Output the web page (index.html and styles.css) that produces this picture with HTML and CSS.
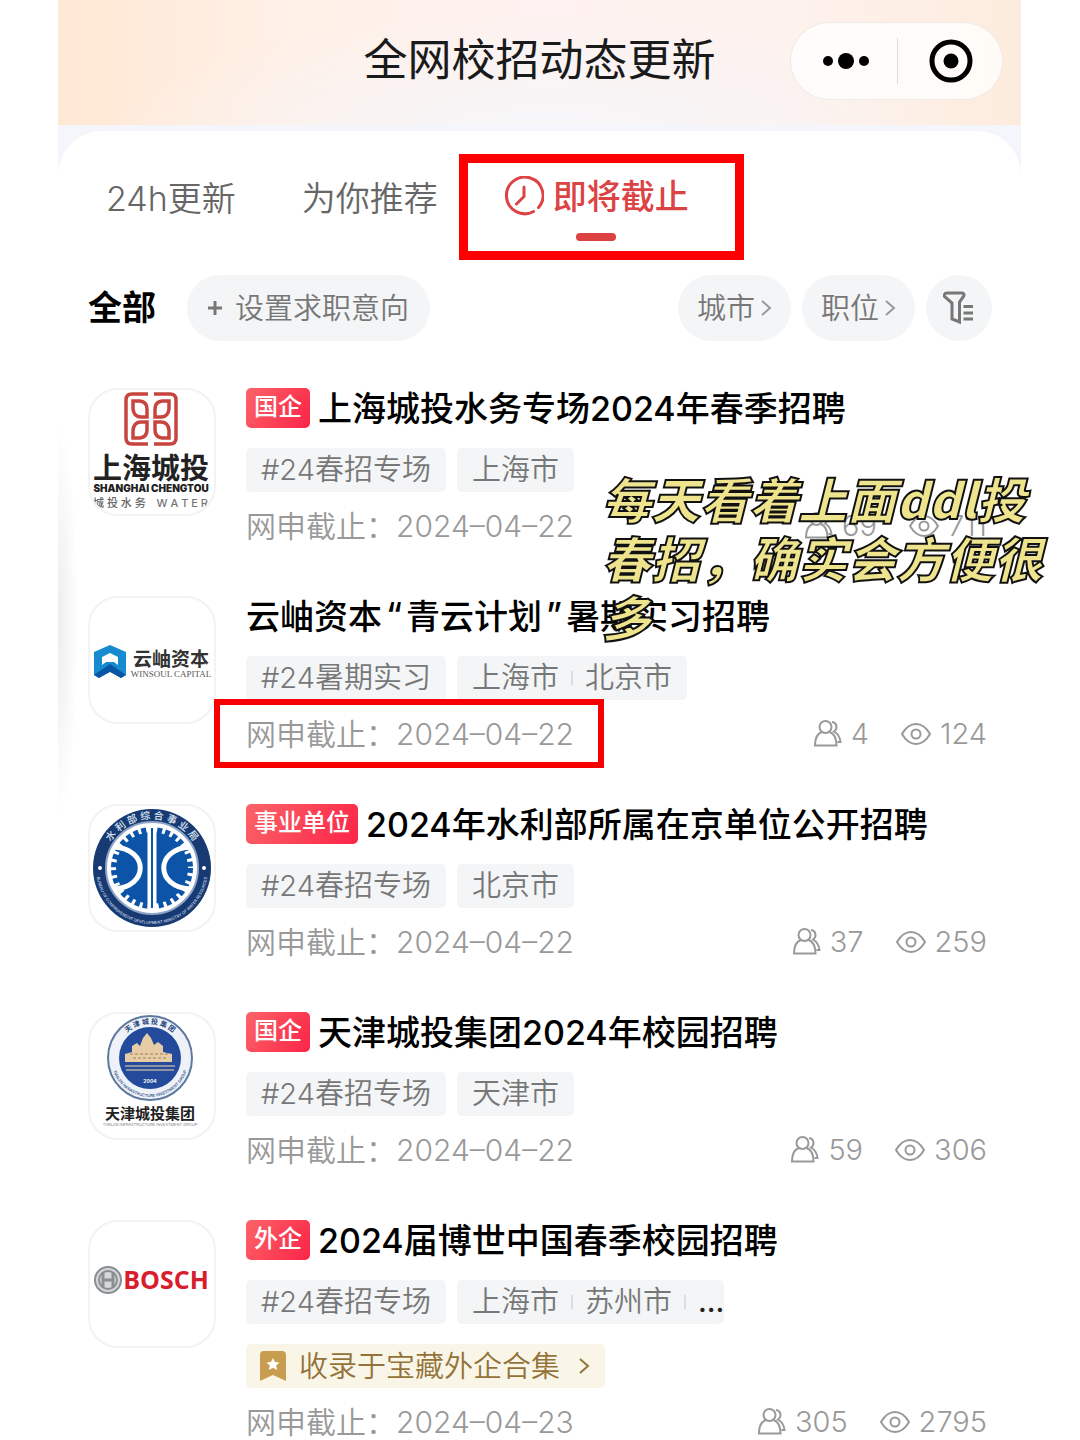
FILE: index.html
```html
<!DOCTYPE html>
<html lang="zh-CN">
<head>
<meta charset="utf-8">
<meta name="viewport" content="width=device-width, initial-scale=1">
<title>全网校招动态更新</title>
<link rel="stylesheet" href="styles.css">
</head>
<body>
<svg class="defs" aria-hidden="true">
  <symbol id="people" viewBox="0 0 28 28">
    <circle cx="11.500" cy="7" r="6"/>
    <path d="M8 12C3.500 13.500 1 18 1 25.500h21.500c0-7.500-2.500-12-7-13.500M18 2c5 .5 6 7 2 9.500 3.500 2 6 5 6.500 10.500h-3"/>
  </symbol>
  <symbol id="eye" viewBox="0 0 30 24">
    <path d="M1 12C5 5 10 2 15 2s10 3 14 10c-4 7-9 10-14 10S5 19 1 12z"/>
    <circle cx="15" cy="12" r="4.500"/>
  </symbol>
  <symbol id="chevron" viewBox="0 0 12 18">
    <path d="M2 2l8 7-8 7"/>
  </symbol>
</svg>

<div class="app">
  <header class="navbar">
    <h1 class="navbar-title">全网校招动态更新</h1>
    <div class="capsule">
      <button class="capsule-button" aria-label="更多">
        <svg width="48" height="18" viewBox="0 0 48 18"><circle cx="6" cy="9" r="5"/><circle cx="24" cy="9" r="8"/><circle cx="42" cy="9" r="5"/></svg>
      </button>
      <button class="capsule-button" aria-label="关闭">
        <svg width="44" height="44" viewBox="0 0 44 44"><circle cx="22" cy="22" r="19" fill="none" stroke="#000" stroke-width="5"/><circle cx="22" cy="22" r="7.500"/></svg>
      </button>
    </div>
  </header>

  <main class="sheet">
    <nav class="tabs">
      <a class="tab" href="#latest">24h更新</a>
      <a class="tab" href="#recommended">为你推荐</a>
      <a class="tab tab-active" href="#closing" aria-current="page">
        <svg class="clock" viewBox="0 0 40 40"><path d="M29.500 35.500A18.300 18.300 0 1 1 34.500 31.500M20 11v9.500l-7.500 7.500"/></svg>
        <span>即将截止</span>
      </a>
    </nav>

    <div class="filters">
      <button class="filter-all">全部</button>
      <button class="pill pill-intent"><svg width="16" height="16" viewBox="0 0 16 16"><path d="M8 1v14M1 8h14"/></svg>设置求职意向</button>
      <button class="pill pill-pick">城市<svg class="pick-arrow"><use href="#chevron"/></svg></button>
      <button class="pill pill-pick">职位<svg class="pick-arrow"><use href="#chevron"/></svg></button>
      <button class="pill pill-icon" aria-label="筛选">
        <svg width="32" height="34" viewBox="0 0 32 34"><path d="M4 2h15c2 0 2.500 2 1.500 3.500L16.500 11v20L9 28V12L2 6C.5 4.500 1.500 2 4 2zM20.500 15.500H30M20.500 22H30M20.500 28H30"/></svg>
      </button>
    </div>

    <ul class="jobs">
      <li class="job">
        <svg class="logo" viewBox="2 2 124 124" role="img" aria-label="上海城投">
          <g fill="none" stroke="#c8443f" stroke-width="3.500">
            <path d="M60 6H44q-6 0-6 6v38q0 6 6 6h16M66 6h16q6 0 6 6v38q0 6-6 6H66"/>
            <path d="M59 29V21q0-7-7-8h-7v8q1 8 8 8zM67 29V21q0-7 7-8h7v8q-1 8-8 8zM59 34v8q0 7-7 8h-7v-8q1-8 8-8zM67 34v8q0 7 7 8h7v-8q-1-8-8-8z"/>
          </g>
          <text x="63" y="91" font-size="29" font-weight="700" text-anchor="middle" fill="#222">上海城投</text>
          <text x="63" y="104" font-size="10" font-weight="900" text-anchor="middle" fill="#222">SHANGHAI CHENGTOU</text>
          <text x="5" y="119" font-size="11" fill="#666" font-weight="500">城 投 水 务</text>
          <text x="120" y="119" font-size="11" text-anchor="end" fill="#777" font-weight="500">W A T E R</text>
        </svg>
        <div class="job-body">
          <h2 class="job-title"><span class="badge">国企</span>上海城投水务专场2024年春季招聘</h2>
          <div class="tags"><span class="tag">#24春招专场</span><span class="tag">上海市</span></div>
          <div class="meta">
            <span class="deadline">网申截止：<time datetime="2024-04-22">2024–04–22</time></span>
            <span class="stat"><svg class="icon-people"><use href="#people"/></svg>69</span>
            <span class="stat"><svg class="icon-eye"><use href="#eye"/></svg>711</span>
          </div>
        </div>
        <p class="note">每天看着上面ddl投<br>春招，确实会方便很<br>多</p>
      </li>

      <li class="job">
        <svg class="logo" viewBox="2 2 124 124" role="img" aria-label="云岫资本">
          <path d="M6 56l16-7 16 7v23l-5 3-11-7-11 7-5-3z" fill="#168bcf"/>
          <path d="M6 79l16-11 16 11-5 3-11-6-11 6z" fill="#0755a5"/>
          <path d="M14 61l8-4 8 4v8l-4-3h-8l-4 3z" fill="#fff"/>
          <text x="83" y="70" font-size="19" font-weight="700" text-anchor="middle" fill="#333">云岫资本</text>
          <text class="serif" x="83" y="81" font-size="9" text-anchor="middle" fill="#555">WINSOUL CAPITAL</text>
        </svg>
        <div class="job-body">
          <h2 class="job-title">云岫资本<span class="quote">“</span>青云计划<span class="quote">”</span>暑期实习招聘</h2>
          <div class="tags"><span class="tag">#24暑期实习</span><span class="tag"><span>上海市</span><span>北京市</span></span></div>
          <div class="meta">
            <span class="deadline deadline-marked">网申截止：<time datetime="2024-04-22">2024–04–22</time></span>
            <span class="stat"><svg class="icon-people"><use href="#people"/></svg>4</span>
            <span class="stat"><svg class="icon-eye"><use href="#eye"/></svg>124</span>
          </div>
        </div>
      </li>

      <li class="job">
        <svg class="logo" viewBox="2 2 124 124" role="img" aria-label="水利部综合事业局">
          <defs><path id="ring-a" d="M15 64a49 49 0 0 1 98 0"/><path id="ring-b" d="M8 64a56 56 0 0 0 112 0"/></defs>
          <circle cx="64" cy="64" r="59" fill="#173a73"/>
          <circle cx="64" cy="64" r="46" fill="#fff" stroke="#8fa5c8" stroke-width="2"/>
          <circle cx="64" cy="64" r="36" fill="#0c54a8"/>
          <circle cx="64" cy="64" r="38" fill="none" stroke="#0c54a8" stroke-width="6" stroke-dasharray="5 3"/>
          <path d="M64 20v88" stroke="#fff" stroke-width="9"/>
          <path d="M64 24v80" stroke="#0c54a8" stroke-width="2"/>
          <path d="M26 43c35 2 35 40 0 42M102 43c-35 2-35 40 0 42" fill="none" stroke="#fff" stroke-width="5"/>
          <circle cx="12" cy="64" r="2" fill="#fff"/><circle cx="116" cy="64" r="2" fill="#fff"/>
          <text font-size="10" font-weight="500" fill="#dfe7f3"><textPath href="#ring-a" startOffset="50%" text-anchor="middle">水 利 部 综 合 事 业 局</textPath></text>
          <text font-size="4" font-weight="500" fill="#c9d5e8"><textPath href="#ring-b" startOffset="50%" text-anchor="middle">BUREAU OF COMPREHENSIVE DEVELOPMENT MINISTRY OF WATER RESOURCES</textPath></text>
        </svg>
        <div class="job-body">
          <h2 class="job-title"><span class="badge">事业单位</span>2024年水利部所属在京单位公开招聘</h2>
          <div class="tags"><span class="tag">#24春招专场</span><span class="tag">北京市</span></div>
          <div class="meta">
            <span class="deadline">网申截止：<time datetime="2024-04-22">2024–04–22</time></span>
            <span class="stat"><svg class="icon-people"><use href="#people"/></svg>37</span>
            <span class="stat"><svg class="icon-eye"><use href="#eye"/></svg>259</span>
          </div>
        </div>
      </li>

      <li class="job">
        <svg class="logo" viewBox="2 2 124 124" role="img" aria-label="天津城投集团">
          <defs><path id="ring-c" d="M28 46a34 34 0 0 1 68 0"/><path id="ring-d" d="M23 46a39 39 0 0 0 78 0"/></defs>
          <circle cx="62" cy="46" r="42" fill="#eef2f8" stroke="#5f789f" stroke-width="2"/>
          <circle cx="62" cy="46" r="31" fill="#244b9b"/>
          <path d="M37 50v-8l7-2v-6l5-3 3 3 3-8 4-5 4 5 3 7 4-3 5 4v6l9 2v8z" fill="#e6cda5"/>
          <path d="M37 54h50M38 58h48" stroke="#8f92a0" stroke-width="2"/>
          <path d="M42 42h40M45 46h34" stroke="#9b8160" stroke-width="1" stroke-dasharray="3 2"/>
          <text x="62" y="71" font-size="5" font-weight="700" fill="#fff" text-anchor="middle">2004</text>
          <text font-size="7" fill="#24457f" font-weight="700"><textPath href="#ring-c" startOffset="50%" text-anchor="middle">天 津 城 投 集 团</textPath></text>
          <text font-size="4" font-weight="500" fill="#24457f"><textPath href="#ring-d" startOffset="50%" text-anchor="middle">TIANJIN INFRASTRUCTURE INVESTMENT GROUP</textPath></text>
          <text x="62" y="107" font-size="15" font-weight="700" text-anchor="middle" fill="#222">天津城投集团</text>
          <text x="62" y="114" font-size="4" text-anchor="middle" fill="#555">TIANJIN INFRASTRUCTURE INVESTMENT GROUP</text>
        </svg>
        <div class="job-body">
          <h2 class="job-title"><span class="badge">国企</span>天津城投集团2024年校园招聘</h2>
          <div class="tags"><span class="tag">#24春招专场</span><span class="tag">天津市</span></div>
          <div class="meta">
            <span class="deadline">网申截止：<time datetime="2024-04-22">2024–04–22</time></span>
            <span class="stat"><svg class="icon-people"><use href="#people"/></svg>59</span>
            <span class="stat"><svg class="icon-eye"><use href="#eye"/></svg>306</span>
          </div>
        </div>
      </li>

      <li class="job">
        <svg class="logo" viewBox="2 2 124 124" role="img" aria-label="BOSCH">
          <g fill="none" stroke="#8b8f92" stroke-width="2">
            <circle cx="20" cy="60" r="13" fill="#d4d7d8"/>
            <circle cx="20" cy="60" r="9"/>
            <path d="M15 52v16M25 52v16M15 60h10" stroke-width="3"/>
          </g>
          <text class="bosch" x="78" y="69" font-size="25" font-weight="700" text-anchor="middle" fill="#d81e2c">BOSCH</text>
        </svg>
        <div class="job-body">
          <h2 class="job-title"><span class="badge">外企</span>2024届博世中国春季校园招聘</h2>
          <div class="tags"><span class="tag">#24春招专场</span><span class="tag tag-cut"><span>上海市</span><span>苏州市</span><span class="more">...</span></span></div>
          <a class="collection" href="#collection">
            <svg width="28" height="32" viewBox="0 0 28 32"><path d="M5 1h18q4 0 4 4v26l-13-6-13 6V5q0-4 4-4z" fill="#c89d50"/><path d="M14 8l2 4 4.500.5-3.300 3 .9 4.500-4.100-2.200L9.900 20l.9-4.500-3.300-3L12 12z" fill="#fff"/></svg>
            <span class="collection-name">收录于宝藏外企合集</span>
            <svg class="collection-arrow"><use href="#chevron"/></svg>
          </a>
          <div class="meta">
            <span class="deadline">网申截止：<time datetime="2024-04-23">2024–04–23</time></span>
            <span class="stat"><svg class="icon-people"><use href="#people"/></svg>305</span>
            <span class="stat"><svg class="icon-eye"><use href="#eye"/></svg>2795</span>
          </div>
        </div>
      </li>
    </ul>
  </main>
</div>
</body>
</html>
```

FILE: styles.css
```css
*,
*::before,
*::after {
  box-sizing: border-box;
}

body {
  margin: 0;
  background: #fff;
  color: #000;
  font-family: Inter, "Noto Sans CJK SC", sans-serif;
  font-size: 29px;
  font-weight: 350;
}

button {
  padding: 0;
  border: 0;
  background: none;
  color: inherit;
  font: inherit;
}

a {
  color: inherit;
  text-decoration: none;
}

h1,
h2,
p,
ul {
  margin: 0;
  padding: 0;
}

svg {
  flex: none;
}

.defs {
  display: none;
}

.app {
  margin: 0 59px 0 58px;
  background: #f4f6fc;
}

/* Top bar */

.navbar {
  display: grid;
  grid-template-columns: 1fr auto 1fr;
  align-items: center;
  height: 125px;
  padding: 0 18px;
  background:
    radial-gradient(ellipse 45% 100% at 50% 110%, #f5f6f9, rgba(245, 246, 249, 0)),
    linear-gradient(to right, #ffe8d4, #fff0e7 25%, #fff2f0 50%, #fef2ee 75%, #fdecdd);
}

.navbar-title {
  grid-column: 2;
  padding-bottom: 6px;
  color: #1a1a1a;
  font-size: 44px;
  font-weight: 400;
  line-height: 64px;
}

.capsule {
  display: flex;
  justify-self: end;
  width: 213px;
  height: 78px;
  margin-bottom: 4px;
  border: 1px solid #f0e9e6;
  border-radius: 39px;
  background: rgba(255, 255, 255, 0.75);
}

.capsule-button {
  display: grid;
  flex: 1;
  place-items: center;
  padding-left: 4px;
}

.capsule-button + .capsule-button {
  background: linear-gradient(#ddd, #ddd) left / 1px 46px no-repeat;
}

/* White sheet */

.sheet {
  margin-top: 6px;
  padding: 23px 29px 0 30px;
  border-radius: 44px 44px 0 0;
  background:
    radial-gradient(ellipse 20px 200px at 0 490px, #ededed, #fff) no-repeat,
    #fff;
}

.tabs {
  display: flex;
  gap: 66px;
  height: 106px;
  padding-left: 18px;
  color: #666;
  font-size: 34px;
  line-height: 50px;
}

.tab {
  padding-top: 20px;
}

.tab-active {
  display: flex;
  position: relative;
  gap: 9px;
  align-self: flex-start;
  padding-top: 18px;
  color: #dc4345;
  font-weight: 500;
}

.tab-active::before {
  position: absolute;
  top: 79px;
  left: 50%;
  width: 40px;
  height: 8px;
  margin-left: -20px;
  border-radius: 4px;
  background: #dc4040;
  content: "";
}

.tab-active::after {
  position: absolute;
  inset: 0 -55px auto -45px;
  height: 106px;
  border: 9px solid #fe0000;
  content: "";
}

.clock {
  width: 40px;
  height: 40px;
  margin-top: 4px;
  fill: none;
  stroke: #dc4345;
  stroke-width: 3;
  stroke-linecap: round;
}

/* Filters */

.filters {
  display: flex;
  gap: 11px;
  align-items: center;
  margin-top: 15px;
}

.filter-all {
  margin-right: 20px;
  padding-bottom: 5px;
  font-size: 34px;
  font-weight: 700;
}

.pill {
  display: flex;
  align-items: center;
  justify-content: center;
  height: 66px;
  padding-bottom: 5px;
  border-radius: 33px;
  background: #f3f5f7;
  color: #777;
}

.pill svg {
  margin-top: 5px;
  fill: none;
  stroke: #777;
  stroke-width: 3;
}

.pill-intent {
  gap: 12px;
  margin-right: auto;
  padding: 0 21px 5px 20px;
}

.pill-pick {
  gap: 5px;
  width: 113px;
}

.pill .pick-arrow {
  width: 12px;
  height: 18px;
  stroke: #999;
  stroke-width: 2;
}

.pill-icon {
  width: 66px;
}

/* Job list */

.jobs {
  display: grid;
  gap: 52px;
  padding-top: 47px;
  list-style: none;
}

.job {
  display: flex;
  position: relative;
  gap: 30px;
  align-items: flex-start;
}

.logo {
  width: 128px;
  height: 128px;
  border: 2px solid #f3f3f3;
  border-radius: 30px;
}

.serif {
  font-family: "Liberation Serif", serif;
}

.bosch {
  font-family: "Open Sans", sans-serif;
}

.job-body {
  display: flex;
  flex: 1;
  flex-direction: column;
  align-items: flex-start;
  min-width: 0;
}

.job-title {
  display: flex;
  align-items: center;
  height: 42px;
  padding-bottom: 5px;
  font-size: 34px;
  font-weight: 500;
  white-space: nowrap;
}

.badge {
  height: 40px;
  margin: 3px 8px 0 0;
  padding: 0 8px;
  border-radius: 5px;
  background: linear-gradient(120deg, #fb6468, #fc2448);
  color: #fff;
  font-size: 24px;
  line-height: 38px;
}

.quote {
  padding: 0 4px;
}

.tags {
  display: flex;
  gap: 11px;
  margin-top: 18px;
  color: #777;
}

.tag {
  display: flex;
  height: 44px;
  padding: 0 15px;
  border-radius: 5px;
  background: #f3f5f7;
  line-height: 43px;
  white-space: nowrap;
}

.tag > span + span {
  margin-left: 12px;
  padding-left: 14px;
  background: linear-gradient(#ddd, #ddd) left / 2px 14px no-repeat;
}

.tag-cut {
  padding-right: 0;
}

.tag .more {
  color: #222;
  font-weight: 500;
}

.collection {
  display: flex;
  gap: 12px;
  align-items: center;
  height: 44px;
  margin-top: 20px;
  padding: 0 15px 0 13px;
  border-radius: 5px;
  background: #faf6e7;
  color: #94733a;
}

.collection-name {
  padding-bottom: 4px;
}

.collection-arrow {
  width: 12px;
  height: 18px;
  margin-left: 6px;
  fill: none;
  stroke: #94733a;
  stroke-width: 2;
}

.meta {
  display: flex;
  gap: 32px;
  align-items: center;
  align-self: stretch;
  height: 36px;
  margin-top: 16px;
  padding-right: 5px;
  color: #999;
  line-height: 36px;
  white-space: nowrap;
}

.deadline {
  margin-right: auto;
  font-size: 30px;
}

.stat {
  display: flex;
  gap: 9px;
  align-items: center;
}

.stat svg {
  fill: none;
  stroke: #999;
  stroke-width: 2;
}

.icon-people {
  width: 28px;
  height: 28px;
}

.icon-eye {
  width: 30px;
  height: 24px;
}

/* Marker drawn round one deadline */

.deadline-marked {
  position: relative;
}

.deadline-marked::after {
  position: absolute;
  inset: -17px -30px -16px -32px;
  border: 6px solid #f90000;
  content: "";
}

/* Handwritten remark lying over the list */

.note {
  position: absolute;
  z-index: 1;
  top: 80px;
  right: -58px;
  width: 448px;
  color: #efe48e;
  font-family: "Noto Sans CJK SC", sans-serif;
  font-size: 49px;
  font-style: italic;
  font-weight: 900;
  line-height: 59px;
  white-space: nowrap;
  -webkit-text-stroke: 2px #111;
}
```
